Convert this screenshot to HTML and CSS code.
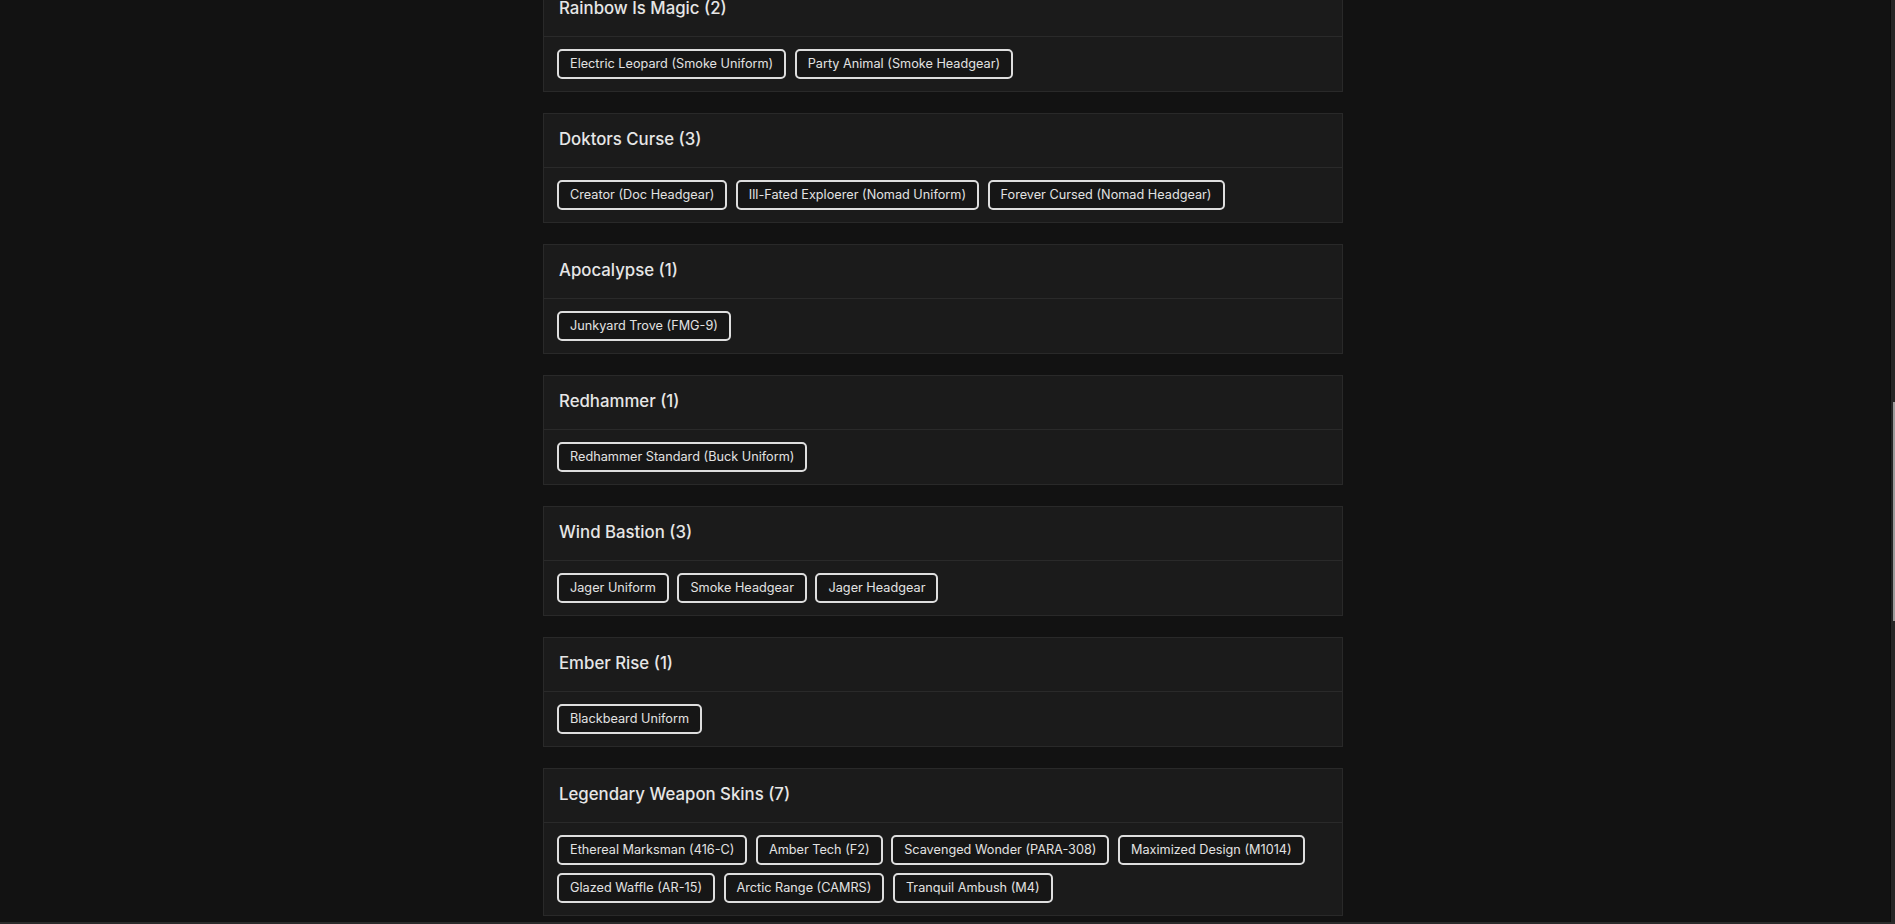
FILE: index.html
```html
<!DOCTYPE html>
<html lang="en">
<head>
<meta charset="utf-8">
<title>Collections</title>
<link rel="stylesheet" href="styles.css">
</head>
<body>
<main class="page">
  <div class="list">
    <section class="card">
      <header class="card-head">Rainbow Is Magic (2)</header>
      <div class="card-body">
        <span class="tag">Electric Leopard (Smoke Uniform)</span>
        <span class="tag">Party Animal (Smoke Headgear)</span>
      </div>
    </section>
    <section class="card">
      <header class="card-head">Doktors Curse (3)</header>
      <div class="card-body">
        <span class="tag">Creator (Doc Headgear)</span>
        <span class="tag">Ill-Fated Exploerer (Nomad Uniform)</span>
        <span class="tag">Forever Cursed (Nomad Headgear)</span>
      </div>
    </section>
    <section class="card">
      <header class="card-head">Apocalypse (1)</header>
      <div class="card-body">
        <span class="tag">Junkyard Trove (FMG-9)</span>
      </div>
    </section>
    <section class="card">
      <header class="card-head">Redhammer (1)</header>
      <div class="card-body">
        <span class="tag">Redhammer Standard (Buck Uniform)</span>
      </div>
    </section>
    <section class="card">
      <header class="card-head">Wind Bastion (3)</header>
      <div class="card-body">
        <span class="tag">Jager Uniform</span>
        <span class="tag">Smoke Headgear</span>
        <span class="tag">Jager Headgear</span>
      </div>
    </section>
    <section class="card">
      <header class="card-head">Ember Rise (1)</header>
      <div class="card-body">
        <span class="tag">Blackbeard Uniform</span>
      </div>
    </section>
    <section class="card">
      <header class="card-head">Legendary Weapon Skins (7)</header>
      <div class="card-body">
        <span class="tag">Ethereal Marksman (416-C)</span>
        <span class="tag">Amber Tech (F2)</span>
        <span class="tag">Scavenged Wonder (PARA-308)</span>
        <span class="tag">Maximized Design (M1014)</span>
        <span class="tag">Glazed Waffle (AR-15)</span>
        <span class="tag">Arctic Range (CAMRS)</span>
        <span class="tag">Tranquil Ambush (M4)</span>
      </div>
    </section>
  </div>
</main>
<div class="scrollbar"><div class="scroll-thumb"></div></div>
<div class="bottom-edge"></div>
</body>
</html>
```
FILE: styles.css
```css
html, body {
  margin: 0;
  padding: 0;
  height: 100%;
  overflow: hidden;
  background: #121212;
}

body {
  font-family: Inter, "Liberation Sans", sans-serif;
  color: #e4e4e4;
}

.page {
  padding-right: 9px;
}

.list {
  width: 800px;
  margin: -18px auto 0;
  display: flex;
  flex-direction: column;
  gap: 21px;
}

.card {
  background: #1b1b1b;
  border: 1px solid #292929;
}

.card-head {
  font-size: 16.8px;
  line-height: 21px;
  font-weight: 500;
  padding: 15px 15px 17px;
  border-bottom: 1px solid #2a2a2a;
  color: #e6e6e6;
}

.card-body {
  display: flex;
  flex-wrap: wrap;
  gap: 8px 8.5px;
  padding: 12px 12px 12px 13px;
}

.tag {
  display: inline-block;
  border: 2px solid #dedede;
  border-radius: 5px;
  background: #161616;
  font-size: 12.7px;
  line-height: 26px;
  padding: 0 11px;
  color: #e2e2e2;
  white-space: nowrap;
}

.scrollbar {
  position: fixed;
  top: 0;
  right: 0;
  width: 4px;
  height: 100%;
  background: #262626;
  border-left: 1px solid #0c0c0c;
}

.scroll-thumb {
  position: absolute;
  top: 402px;
  right: 0;
  width: 2px;
  height: 219px;
  background: #9a9a9a;
}

.bottom-edge {
  position: fixed;
  left: 0;
  right: 0;
  bottom: 0;
  height: 2px;
  background: #2b2b2b;
}
```
